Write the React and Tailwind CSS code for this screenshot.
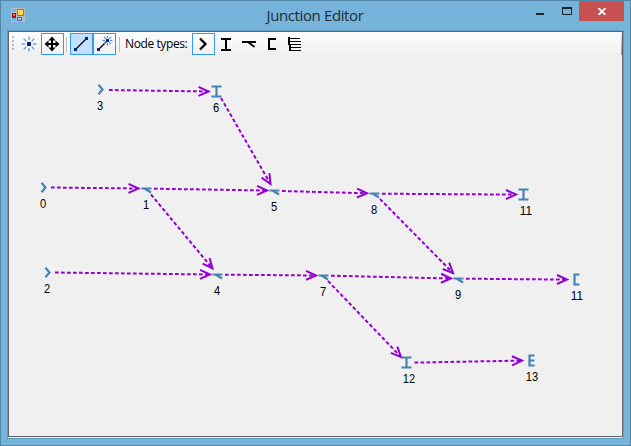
const edges = [
  [109, 90, 208.5, 91.5],
  [51, 187.5, 138.5, 188.5],
  [154, 188.7, 267, 190.5],
  [221, 98, 270.5, 184],
  [282, 191, 367, 193.3],
  [382, 193.7, 516, 194.6],
  [380, 199, 453, 273],
  [151, 194.5, 212.5, 268.5],
  [55, 272.5, 210, 274.5],
  [225, 274.7, 316, 275.5],
  [331, 275.7, 451, 278.5],
  [466, 278.7, 567, 279.6],
  [328, 281, 401, 357],
  [414.5, 362.6, 522, 360.6],
];

const nodes = [
  ['entry', 101, 89.5, '3', 100, 110],
  ['both', 216.5, 91.5, '6', 216, 112],
  ['entry', 44, 187.5, '0', 43, 208],
  ['switch', 146.5, 188.5, '1', 146, 209],
  ['switch', 274.5, 190.5, '5', 274, 211],
  ['switch', 374.5, 193.5, '8', 374, 214],
  ['both', 523.5, 194.5, '11', 526, 215],
  ['entry', 48, 272.5, '2', 47, 293],
  ['switch', 217.5, 274.5, '4', 217, 295],
  ['switch', 323.5, 275.5, '7', 323, 296],
  ['switch', 458.5, 278.5, '9', 458, 299],
  ['end', 576.5, 279.5, '11', 577, 300],
  ['both', 406.5, 362.5, '12', 409, 383],
  ['stack', 531.5, 360.5, '13', 532, 381],
];

const shapes = {
  entry: 'M-2.5 -4.8L1.5 0L-2.5 4.8',
  both: 'M-5 -5H5M-5 5H5M0 -5V5',
  switch: 'M-5 0H5M-2 0L4.5 4',
  end: 'M3 -5H-2V5H3',
  stack: 'M3 -5H-2V5H3M-2 0H3',
};

function Edge({ points: [x1, y1, x2, y2] }) {
  const angle = (Math.atan2(y2 - y1, x2 - x1) * 180) / Math.PI;
  return (
    <g stroke="#9400d3" strokeWidth="2" fill="none">
      <path d={`M${x1} ${y1}L${x2} ${y2}`} strokeDasharray="3.7 2.3" />
      <path d="M-10 -4.5L0 0L-10 4.5" transform={`translate(${x2} ${y2}) rotate(${angle})`} />
    </g>
  );
}

function Canvas() {
  return (
    <svg className="block" width="613" height="381" viewBox="9 55 613 381">
      {edges.map((e, i) => <Edge key={i} points={e} />)}
      {nodes.map(([kind, x, y, label, lx, ly], i) => (
        <g key={i}>
          <path d={shapes[kind]} transform={`translate(${x} ${y})`} stroke="#4682b4" strokeWidth="2.2" fill="none" />
          <text x={lx} y={ly - 0.5} textAnchor="middle" fontSize="12" fill="#000" textLength={label.length * 6.2} lengthAdjust="spacingAndGlyphs">{label}</text>
        </g>
      ))}
    </svg>
  );
}

function Tool({ on, active, children }) {
  const look = on ? (active ? 'border-[#3399ff] bg-[#c2e0ff]' : 'border-[#3399ff]') : 'border-transparent';
  return (
    <button className={`flex h-[22px] w-[23px] shrink-0 items-center justify-center border ${look}`}>
      <svg width="17" height="16" viewBox="0 0 17 16" fill="none" stroke="#000" strokeWidth="2">{children}</svg>
    </button>
  );
}

function Burst({ cx, cy, r, inner, size }) {
  const rays = [0, 45, 90, 135, 180, 225, 270, 315];
  return (
    <g transform={`translate(${cx} ${cy})`}>
      {rays.map((a) => <path key={a} d={`M${inner} 0H${r}`} transform={`rotate(${a})`} stroke="#5590e4" strokeWidth="1.2" />)}
      <rect x={-size / 2} y={-size / 2} width={size} height={size} fill="#002878" stroke="none" />
    </g>
  );
}

function Toolbar() {
  return (
    <div className="flex h-[23px] items-start bg-gradient-to-b from-[#fdfdfd] to-[#f0f0f0] pt-px">
      <div className="ml-[3px] mt-[3px] flex w-[6px] flex-col gap-[2px]">
        <i className="size-[2px] bg-[#bbb]" /><i className="size-[2px] bg-[#bbb]" /><i className="size-[2px] bg-[#bbb]" /><i className="size-[2px] bg-[#bbb]" />
      </div>
      <Tool><Burst cx={8} cy={8} r={7.5} inner={3.8} size={4} /></Tool>
      <Tool on>
        <path d="M8 2V14M2 8H14" />
        <path d="M8 0.5L11.5 4.5H4.5ZM8 15.5L4.5 11.5H11.5ZM0.5 8L4.5 4.5V11.5ZM15.5 8L11.5 4.5V11.5Z" fill="#000" stroke="none" />
      </Tool>
      <div className="mx-[2px] mt-[4px] h-[15px] w-[2px] border-l border-[#bdbdbd] bg-white" />
      <Tool on active>
        <path d="M3 13L14 2" strokeWidth="1.2" />
        <path d="M1 12H4V15H1ZM12 1H15V4H12Z" fill="#002878" stroke="none" />
      </Tool>
      <Tool on>
        <path d="M3 13L11 5" strokeWidth="1.2" />
        <path d="M1 12H4V15H1Z" fill="#002878" stroke="none" />
        <Burst cx={11.5} cy={4.5} r={5} inner={2.4} size={3} />
      </Tool>
      <div className="ml-[3px] mt-[4px] h-[15px] w-px bg-[#bdbdbd]" />
      <div className="ml-[5px] mr-[2px] h-[22px] w-[65px] whitespace-nowrap font-['Open_Sans',sans-serif] text-[12px] leading-[22px] tracking-[-0.4px] text-black">Node types:</div>
      <Tool on><path d="M5 2.5L10.5 8L5 13.5" strokeWidth="2.2" /></Tool>
      <Tool><path d="M3 3H13M3 14H13M8 3V14" /></Tool>
      <Tool><path d="M1 6H15M7 6L13.5 11" strokeWidth="1.8" /></Tool>
      <Tool><path d="M12 3H5V13H12" /></Tool>
      <Tool>
        <path d="M2 1V9M3 8V15" />
        <path d="M3 2.5H13M3 5.5H14M3 8.5H14M3 11.5H14M3 14.5H14" strokeWidth="1" />
      </Tool>
      <div className="ml-auto h-[22px] w-px bg-gradient-to-b from-[#ddd] to-[#999]" />
    </div>
  );
}

function TitleBar() {
  return (
    <div className="flex h-[29px] items-start">
      <svg className="ml-[10px] mt-[7px] shrink-0" width="14" height="14" viewBox="0 0 14 14">
        <path d="M0 0H14V14H0Z" fill="#b9bcc0" />
        <path d="M1 1H5V4H1ZM1 10H5V13H1Z" fill="#78b3d8" />
        <rect x="6" y="1" width="7" height="7" fill="#b57900" />
        <rect x="7" y="2" width="5" height="5" fill="#ffd84e" />
        <rect x="1" y="5" width="4" height="5" fill="#a80f0f" />
        <rect x="2" y="6" width="2" height="2" fill="#f06a5a" />
        <rect x="6" y="9" width="5" height="4" fill="#3a6fd0" />
        <rect x="7" y="10" width="3" height="2" fill="#9dc0ff" />
      </svg>
      <h1 className="ml-[70px] mt-[3px] flex-1 whitespace-nowrap text-center font-['Open_Sans',sans-serif] text-[15px] leading-[22px] tracking-[-0.38px] text-[#222b33]">Junction Editor</h1>
      <div className="flex shrink-0">
        <svg width="44" height="20" viewBox="534 1 44 20" fill="none" stroke="#222">
          <path d="M535 14H543" strokeWidth="2" />
          <path d="M561.5 8V14.5H570.5V8" />
          <path d="M561 8H571" strokeWidth="2" />
        </svg>
        <button className="mr-[6px] flex h-5 w-[45px] items-center justify-center bg-[#c75050]">
          <svg width="8" height="7" viewBox="0 0 8 7" stroke="#fff" strokeWidth="1.8"><path d="M0.5 0L7.5 7M7.5 0L0.5 7" /></svg>
        </button>
      </div>
    </div>
  );
}

export default function App() {
  return (
    <div className="h-[446px] w-[631px] border border-[#5085a6] bg-[#75b3da] font-['Liberation_Sans',sans-serif]">
      <TitleBar />
      <div className="mx-[6px] h-[409px] border border-[#5d9bc2]">
        <div className="h-[406px] border border-[#62666a] bg-[#f0f0f0]">
          <Toolbar />
          <Canvas />
        </div>
        <div className="h-px bg-[#e8f1f7]" />
      </div>
    </div>
  );
}
